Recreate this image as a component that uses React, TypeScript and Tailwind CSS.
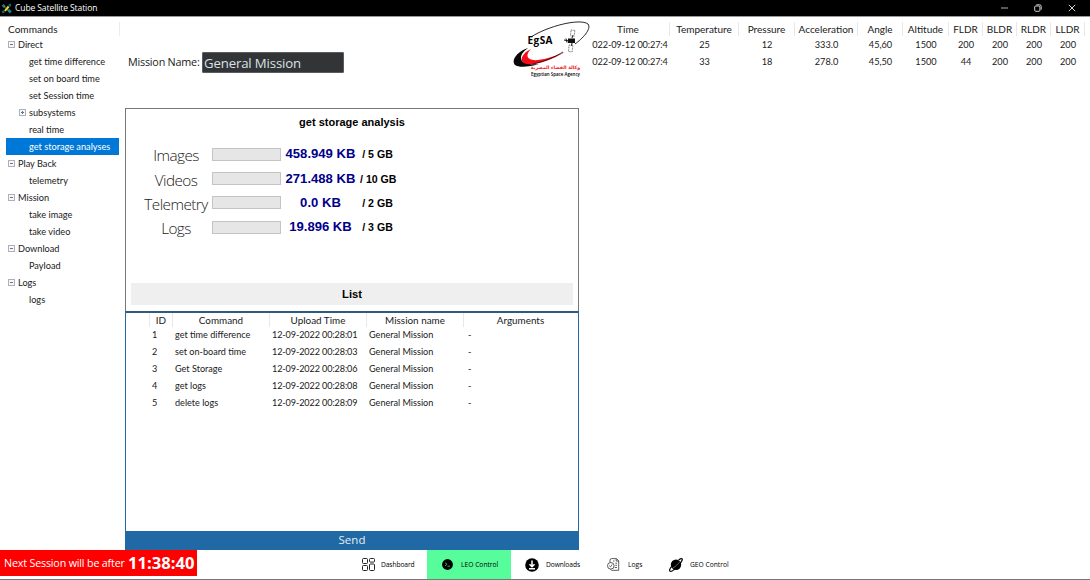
import React from "react";

type Node = { label: string; kind: "group" | "leaf" | "sub" | "active" };

const tree: Node[] = [
  { label: "Direct", kind: "group" },
  { label: "get time difference", kind: "leaf" },
  { label: "set on board time", kind: "leaf" },
  { label: "set Session time", kind: "leaf" },
  { label: "subsystems", kind: "sub" },
  { label: "real time", kind: "leaf" },
  { label: "get storage analyses", kind: "active" },
  { label: "Play Back", kind: "group" },
  { label: "telemetry", kind: "leaf" },
  { label: "Mission", kind: "group" },
  { label: "take image", kind: "leaf" },
  { label: "take video", kind: "leaf" },
  { label: "Download", kind: "group" },
  { label: "Payload", kind: "leaf" },
  { label: "Logs", kind: "group" },
  { label: "logs", kind: "leaf" },
];

const telemetryHead = ["Time", "Temperature", "Pressure", "Acceleration", "Angle", "Altitude", "FLDR", "BLDR", "RLDR", "LLDR"];
const telemetryRows = [
  ["022-09-12 00:27:4", "25", "12", "333.0", "45,60", "1500", "200", "200", "200", "200"],
  ["022-09-12 00:27:4", "33", "18", "278.0", "45,50", "1500", "44", "200", "200", "200"],
];

const storage = [
  { name: "Images", used: "458.949 KB", total: "/ 5 GB" },
  { name: "Videos", used: "271.488 KB", total: "/ 10 GB" },
  { name: "Telemetry", used: "0.0 KB", total: "/ 2 GB" },
  { name: "Logs", used: "19.896 KB", total: "/ 3 GB" },
];

const listHead = ["ID", "Command", "Upload Time", "Mission name", "Arguments"];
const listRows = [
  ["1", "get time difference", "12-09-2022 00:28:01", "General Mission", "-"],
  ["2", "set on-board time", "12-09-2022 00:28:03", "General Mission", "-"],
  ["3", "Get Storage", "12-09-2022 00:28:06", "General Mission", "-"],
  ["4", "get logs", "12-09-2022 00:28:08", "General Mission", "-"],
  ["5", "delete logs", "12-09-2022 00:28:09", "General Mission", "-"],
];

function Toggle({ open }: { open: boolean }) {
  return (
    <svg width="7" height="7" viewBox="0 0 7 7" className="shrink-0">
      <rect x="0.5" y="0.5" width="6" height="6" fill="#f8f8f8" stroke="#b0b0b0" />
      <path d={open ? "M2 3.5H5" : "M2 3.5H5M3.5 2V5"} stroke="#5b72b5" />
    </svg>
  );
}

function TitleBar() {
  return (
    <header className="flex h-4 shrink-0 items-center bg-black text-white">
      <svg width="11" height="11" viewBox="0 0 11 11" className="ml-[1px]">
        <path d="M0.5 2.8L2.7 0.9L4.8 3.3L3 5ZM6.3 7.7L8.2 5.8L10.8 8.6L8.8 10.6Z" fill="#17808a" />
        <path d="M7.3 1.4L9.9 0.4L10.2 3L8.5 4ZM0.8 8.2L3 7.2L3.9 9.4L1.4 10.4Z" fill="#126675" />
        <path d="M3.1 7.4L7 2.6L8.3 4.5L4.6 8.6Z" fill="#f4d82b" />
        <path d="M3.5 4L7.5 7.8" stroke="#a5b83a" strokeWidth="0.8" />
      </svg>
      <span className="ml-[3px] font-['Open_Sans',sans-serif] text-[8.5px] leading-4 tracking-[-0.09px]">Cube Satellite Station</span>
      <div className="mr-[14px] ml-auto flex items-center gap-[26px]">
        <svg width="7" height="8" viewBox="0 0 7 8"><path d="M0 4H7" stroke="#ddd" strokeWidth="0.8" /></svg>
        <svg width="8" height="8" viewBox="0 0 8 8" fill="none" stroke="#e5e5e5" strokeWidth="0.9">
          <rect x="0.7" y="2" width="5.2" height="5.3" rx="1" />
          <path d="M2.3 0.8H5.6Q7.2 0.8 7.2 2.3V5.7" />
        </svg>
        <svg width="8" height="8" viewBox="0 0 8 8"><path d="M0.8 0.8L7.2 7.2M7.2 0.8L0.8 7.2" stroke="#eee" strokeWidth="0.9" /></svg>
      </div>
    </header>
  );
}

function CommandTree() {
  return (
    <nav className="w-[125px] shrink-0 pt-[5px] pl-[6px]">
      <div className="h-[14px] w-[114px] border-r border-[#ececec] pl-[2px] text-[10.1px] leading-[15px]">Commands</div>
      {tree.map((n, i) => (
        <div
          key={i}
          className={
            "flex h-[17.04px] w-[113px] items-center text-[9.2px] leading-[17px] " +
            (n.kind === "active" ? "bg-[#0078d7] text-white " : "") +
            (n.kind === "group" ? "gap-[3px] pl-[2px]" : n.kind === "sub" ? "gap-[3px] pl-[13px]" : "pl-[23px]")
          }
        >
          {n.kind === "group" && <Toggle open />}
          {n.kind === "sub" && <Toggle open={false} />}
          <span>{n.label}</span>
        </div>
      ))}
    </nav>
  );
}

function AgencyLogo() {
  return (
    <svg width="80" height="58" viewBox="0 0 80 58" className="shrink-0">
      <path d="M19 16C36 5 68-3 76 3C80 8 70 18 63 23" fill="none" stroke="#111" strokeWidth="0.9" />
      <path d="M16 27C4 31-1 40 3 44C7 47 17 46 27 43C16 44 9 42 9 37C9 33 12 30 16 27Z" fill="#080808" />
      <path d="M19 28C10 32 7 40 12 42C19 46 38 40 53 31C37 38 22 41 18 38C14 36 15 32 19 28Z" fill="#f50b17" />
      <path d="M21 43C35 40 44 35 51 31" fill="none" stroke="#111" strokeWidth="0.8" />
      <path d="M52 19L57 20" stroke="#111" strokeWidth="1" />
      <path d="M56 17.5H63V22H56Z" fill="#111" />
      <path d="M54 17.5L55 21.5M60 17L61 14M60 22L59.5 25" stroke="#111" strokeWidth="1" />
      <path d="M59 9L63 9.5L62 15.5L58.5 15ZM57 24L61 24.5L60 31L56.5 30.5Z" fill="none" stroke="#666" strokeWidth="0.9" strokeDasharray="1 0.6" />
      <text x="15.5" y="22.5" textLength="25" fontFamily="Open Sans, sans-serif" fontWeight="700" fontSize="10">EgSA</text>
      <text x="43.5" y="47.8" textAnchor="middle" fontFamily="DejaVu Sans, sans-serif" fontSize="4.7" fontWeight="700" fill="#f01820">وكالة الفضاء المصرية</text>
      <text x="19" y="54.8" textLength="49" lengthAdjust="spacingAndGlyphs" fontFamily="Open Sans, sans-serif" fontWeight="600" fontSize="4.8">Egyptian Space Agency</text>
    </svg>
  );
}

function StoragePanel() {
  return (
    <section className="flex h-[203px] shrink-0 flex-col border border-b-0 border-[#777] font-['Liberation_Sans',sans-serif] font-bold text-black">
      <h2 className="mt-[6px] h-4 text-center text-[11px] leading-[15px]">get storage analysis</h2>
      <div className="mt-[11px] flex flex-col">
        {storage.map((s) => (
          <div key={s.name} className="flex h-[24.4px] items-center">
            <div className="ml-[14px] w-[72px] pt-[2px] text-center font-['Open_Sans',sans-serif] text-[15.3px] leading-5 font-light tracking-[-0.55px] text-[#222]">{s.name}</div>
            <div className="h-[13px] w-[69px] border border-[#c4c4c4] bg-[#e6e6e6]" />
            <div className="w-[79px] text-center text-[13.1px] leading-5 text-[#00008b]">{s.used}</div>
            <div className="w-[35px] text-center text-[10.6px] leading-5 whitespace-nowrap">{s.total}</div>
          </div>
        ))}
      </div>
      <div className="mx-[5px] mt-auto mb-[6px] h-[22px] bg-[#efefef] text-center text-[11.2px] leading-[22px]">List</div>
    </section>
  );
}

const listGrid = "grid grid-cols-[23px_97px_97px_97px_114px] pl-[23px]";

function CommandList() {
  return (
    <section className="flex h-[239px] shrink-0 flex-col border border-t-2 border-[#2069a4] border-t-[#315b7e]">
      <div className={listGrid + " h-[13px] text-center text-[9.9px] leading-[14px]"}>
        {listHead.map((h) => (
          <div key={h} className="border-l border-[#e8e8e8]">{h}</div>
        ))}
      </div>
      <div>
        {listRows.map((r) => (
          <div key={r[0]} className={listGrid + " h-[17px] text-[9.1px] leading-[17px]"}>
            {r.map((c, i) => (
              <div key={i} className={"whitespace-nowrap " + (i === 4 ? "pl-[5px]" : i === 2 ? "pl-[3px] tracking-[-0.11px]" : "pl-[3px]")}>{c}</div>
            ))}
          </div>
        ))}
      </div>
      <button className="mt-auto h-[18px] w-full bg-[#2069a4] text-center font-['Open_Sans',sans-serif] text-[11.5px] leading-[18px] text-[#e6edf4]">Send</button>
    </section>
  );
}

const telemetryGrid = "grid grid-cols-[83px_69px_56px_63px_45px_46px_34px_34px_34px_34px]";

function Telemetry() {
  return (
    <section className="pt-[5px] pl-[8px]">
      <div className={telemetryGrid + " h-[14px] text-center text-[10px] leading-[14px]"}>
        {telemetryHead.map((h) => (
          <div key={h} className="border-r border-[#e8e8e8]">{h}</div>
        ))}
      </div>
      {telemetryRows.map((r, k) => (
        <div key={k} className={telemetryGrid + " h-[17px] text-center text-[9.2px] leading-[17px]"}>
          {r.map((c, i) => (
            <div key={i} className={"whitespace-nowrap " + (i === 0 ? "pl-[3px] tracking-[-0.14px]" : "")}>{c}</div>
          ))}
        </div>
      ))}
    </section>
  );
}

function NavBar() {
  return (
    <footer className="flex h-[30px] shrink-0 border-b border-[#777] font-['Open_Sans',sans-serif] text-[6.7px] text-black">
      <div className="flex h-[26px] w-[197px] items-center bg-[#ff0000] pl-[4px] text-white">
        <span className="w-[124px] text-[10.7px] tracking-[-0.16px] whitespace-nowrap">Next Session will be after</span>
        <strong className="text-[16.6px] leading-6">11:38:40</strong>
      </div>
      <div className="ml-[145px] flex w-[85px] items-center pl-5">
        <svg width="13" height="13" viewBox="0 0 13 13" fill="none" stroke="#222" strokeWidth="1">
          <rect x="0.5" y="0.5" width="5" height="5" rx="1" />
          <rect x="7.5" y="0.5" width="5" height="3.6" rx="1" />
          <rect x="0.5" y="7.5" width="5" height="5" rx="1" />
          <rect x="7.5" y="6" width="5" height="6.5" rx="1" />
        </svg>
        <span className="ml-[6px] pt-px tracking-[-0.1px]">Dashboard</span>
      </div>
      <div className="flex w-[84px] items-center bg-[#57fd9b] pl-[15px]">
        <svg width="11" height="11" viewBox="0 0 11 11">
          <circle cx="5.5" cy="5.5" r="5.4" />
          <path d="M3 3.7L5 5.3L3 6.9M5.5 7.2H8" fill="none" stroke="#6bdc9c" strokeWidth="0.7" />
        </svg>
        <span className="ml-2 pt-px">LEO Control</span>
      </div>
      <div className="flex w-[84px] items-center pl-[14px]">
        <svg width="14" height="14" viewBox="0 0 14 14">
          <circle cx="7" cy="7" r="6.8" />
          <path d="M7 2.5V8.5M4.5 6.3L7 8.8L9.5 6.3M4 10.8H10" fill="none" stroke="white" strokeWidth="1.5" />
        </svg>
        <span className="ml-[7px] pt-px tracking-[-0.1px]">Downloads</span>
      </div>
      <div className="flex w-[61px] items-center pl-[12px]">
        <svg width="13" height="13" viewBox="0 0 13 13" fill="none" stroke="#333" strokeWidth="0.8">
          <path d="M3 4.5V2.2Q3 0.6 4.5 0.6H9.4L11.7 2.7V12.3H4.5L3.5 11.3M9.2 0.8V3H11.7" />
          <circle cx="3.8" cy="7.8" r="3.3" />
          <path d="M2.3 7.8L3.5 8.8L5.2 6.5M8.3 5.2H10M8.3 7.3H10M7.8 9.5H10M6 3H7.5" />
        </svg>
        <span className="ml-2 pt-px">Logs</span>
      </div>
      <div className="flex items-center pl-[13px]">
        <svg width="14" height="14" viewBox="0 0 14 14">
          <circle cx="7" cy="6.8" r="5.2" />
          <path d="M2.7 8.3C0.8 10.7 0 12.5 0.9 13.1C2.4 14 6.3 11 9.4 7.4C12.3 4.1 14 1.6 13 0.8C12.4 0.3 11 1 9.6 2" fill="none" stroke="#000" strokeWidth="1.2" />
          <path d="M3.2 10.5C6 9.2 10 5 11.2 3.3" fill="none" stroke="#fff" strokeWidth="0.4" />
        </svg>
        <span className="ml-[7px] pt-px">GEO Control</span>
      </div>
    </footer>
  );
}

export default function App() {
  return (
    <div className="flex h-[580px] w-[1090px] flex-col overflow-hidden bg-white font-['Lato',sans-serif] text-[#202020]">
      <TitleBar />
      <main className="flex h-[534px] shrink-0 border-t border-[#999]">
        <CommandTree />
        <div className="flex w-[454px] shrink-0 flex-col">
          <div className="flex h-[91px] items-center pl-[3px] font-['Open_Sans',sans-serif]">
            <span className="w-[74px] text-[10.8px] tracking-[-0.22px] whitespace-nowrap">Mission Name:</span>
            <div className="h-[21px] w-[142px] rounded-[1px] border border-[#5a5d60] bg-[#323436] pl-[1px] text-[13.2px] leading-[21px] tracking-[-0.14px] text-[#d9e1e9]">General Mission</div>
          </div>
          <StoragePanel />
          <CommandList />
        </div>
        <div className="-ml-[67px] h-[60px] w-[67px] shrink-0 pt-[4px]">
          <AgencyLogo />
        </div>
        <Telemetry />
      </main>
      <NavBar />
    </div>
  );
}
